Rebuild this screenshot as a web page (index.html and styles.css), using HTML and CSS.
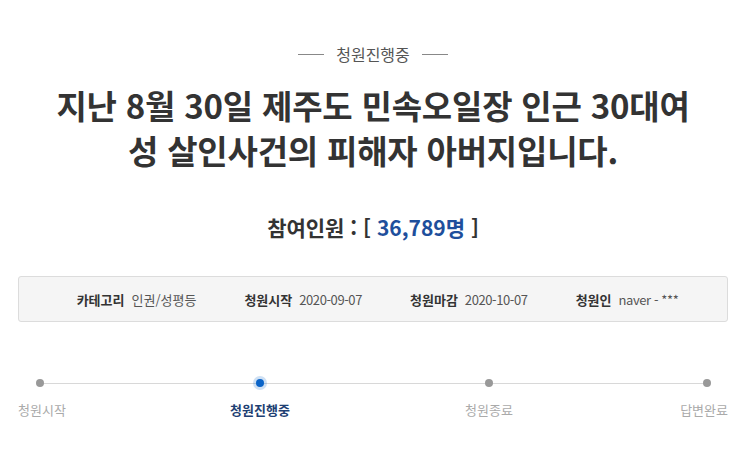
FILE: index.html
```html
<!DOCTYPE html>
<html lang="ko">
<head>
<meta charset="utf-8">
<link rel="stylesheet" href="styles.css">
</head>
<body>
<div class="page">
  <div class="status"><span class="dash"></span><span class="status-text">청원진행중</span><span class="dash"></span></div>
  <h1 class="title">지난 8월 30일 제주도 민속오일장 인근 30대여<br>성 살인사건의 피해자 아버지입니다.</h1>
  <div class="count">참여인원 : [ <span class="num">36,789명</span> ]</div>
  <div class="info">
    <div class="item"><span class="label">카테고리</span><span class="val">인권/성평등</span></div>
    <div class="item"><span class="label">청원시작</span><span class="val num-val">2020-09-07</span></div>
    <div class="item"><span class="label">청원마감</span><span class="val num-val">2020-10-07</span></div>
    <div class="item"><span class="label">청원인</span><span class="val num-val">naver - ***</span></div>
  </div>
  <div class="progress">
    <div class="track"></div>
    <div class="step s1"><span class="dot"></span><span class="step-label">청원시작</span></div>
    <div class="step s2 active"><span class="dot"></span><span class="step-label">청원진행중</span></div>
    <div class="step s3"><span class="dot"></span><span class="step-label">청원종료</span></div>
    <div class="step s4"><span class="dot"></span><span class="step-label">답변완료</span></div>
  </div>
</div>
</body>
</html>
```
FILE: styles.css
```css
html, body { margin: 0; padding: 0; background: #fff; }
body { font-family: "Noto Sans CJK KR", "Noto Sans", sans-serif; color: #333; }
.page { padding: 0 17px 0 18px; }
.status { display: flex; justify-content: center; align-items: center; gap: 12px; padding-top: 42px; height: 24px; }
.status-text { font-size: 16px; color: #555; line-height: 24px; }
.dash { width: 26px; height: 1px; background: #888; }
.title { margin: 17px 0 0; text-align: center; font-size: 33px; font-weight: 700; line-height: 45px; color: #333; letter-spacing: -0.2px; }
.count { margin-top: 39px; text-align: center; font-size: 21px; font-weight: 700; line-height: 30px; color: #333; }
.count .num { color: #1e4f9c; }
.info { margin-top: 34px; height: 44px; border: 1px solid #dcdcdc; border-radius: 3px; background: #f5f5f5; display: flex; justify-content: center; align-items: center; gap: 48px; font-size: 13px; padding-left: 9px; }
.item { display: flex; gap: 7px; align-items: center; }
.label { font-weight: 700; color: #333; }
.val { color: #555; }
.num-val { letter-spacing: -0.4px; }
.progress { position: relative; margin-top: 57px; height: 50px; }
.track { position: absolute; left: 22px; right: 21px; top: 4px; height: 1px; background: #d8d8d8; }
.step { position: absolute; top: 0; display: flex; flex-direction: column; align-items: center; }
.dot { width: 8px; height: 8px; border-radius: 50%; background: #999; margin-top: 0; }
.step-label { margin-top: 13px; font-size: 13px; color: #aaa; white-space: nowrap; }
.s1 { left: 0; align-items: flex-start; }
.s1 .dot { margin-left: 18px; }
.s2 { left: 242px; width: 0; }
.s3 { left: 471px; width: 0; }
.s4 { right: 0; align-items: flex-end; }
.s4 .dot { margin-right: 17px; }
.active .dot { background: #0a64c8; box-shadow: 0 0 0 3px rgba(10,100,200,0.2); }
.active .step-label { color: #1e3f73; font-weight: 700; }
```
